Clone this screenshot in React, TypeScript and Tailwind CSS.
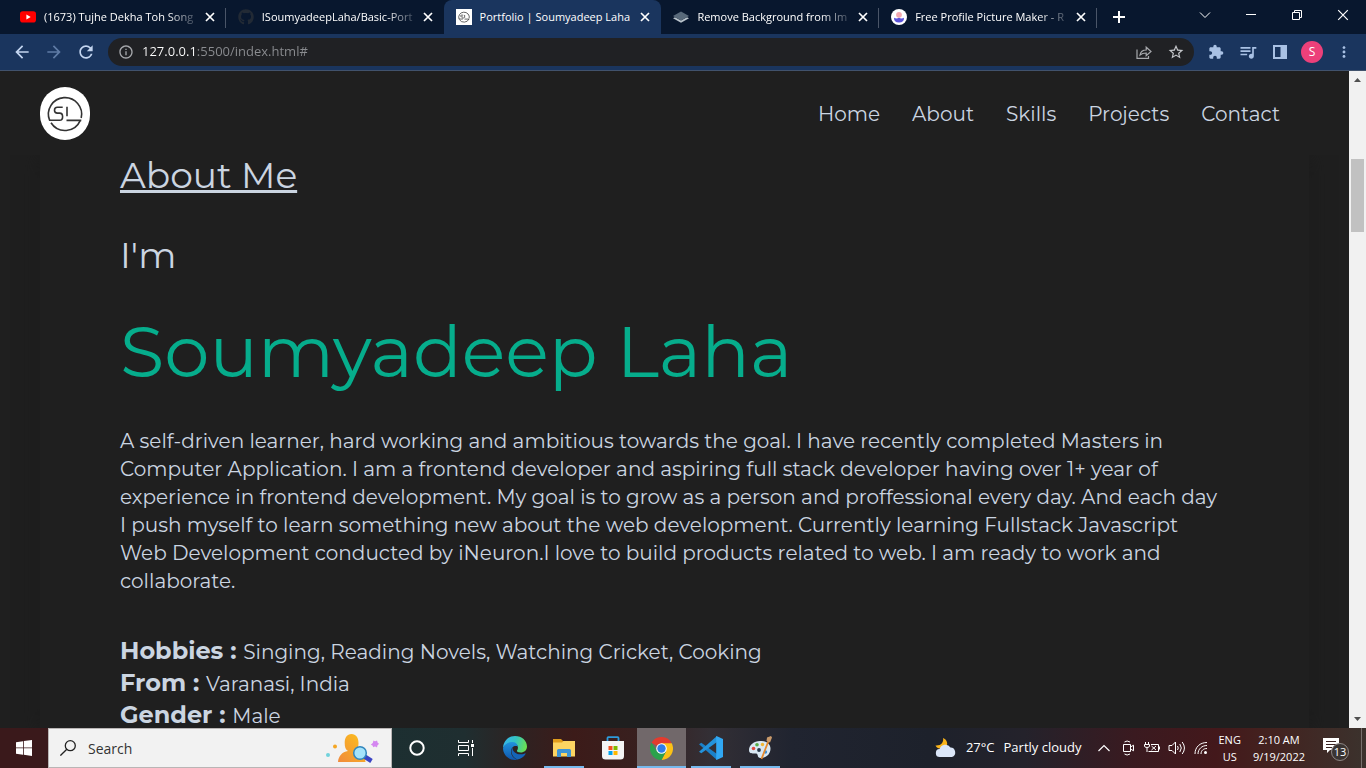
import React from "react";
import type { ReactNode } from "react";
import {
  MdArrowBack,
  MdArrowForward,
  MdRefresh,
  MdInfoOutline,
  MdStarBorder,
  MdExtension,
  MdQueueMusic,
  MdMoreVert,
} from "react-icons/md";
import { FaGithub } from "react-icons/fa";

function Monogram({ className, thin = 2 }: { className: string; thin?: number }) {
  return (
    <svg viewBox="0 0 50 53" preserveAspectRatio="none" className={className} fill="none" stroke="#333" strokeWidth={thin} aria-hidden="true">
      <path d="M9.600 33.300A16.600 16.600 0 1 1 41.200 31" />
      <path d="M11 35.800A16.600 16.600 0 0 0 40.300 33.400" />
      <path d="M22.700 20.300h-5.300q-2.900 0-2.900 2.900t2.900 2.900h2.300q2.900 0 2.900 3.600t-2.900 3.600H9" />
      <path d="M27 19.700v9.600M26.500 33.400h14.800" />
    </svg>
  );
}

function YouTubeIcon() {
  return (
    <svg viewBox="0 0 16 16" className="size-4" aria-hidden="true">
      <rect x="0" y="2.2" width="16" height="11.4" rx="2.8" fill="#f00" />
      <path d="M6.400 5.400v5l4.300-2.500z" fill="#fff" />
    </svg>
  );
}

function LayersIcon() {
  return (
    <svg viewBox="0 0 16 16" className="size-4" aria-hidden="true">
      <path d="M0 9.300l8 4.500 8-4.500-2-1-6 3.300-6-3.300z" fill="#b9c3cb" />
      <path d="M0 7l8-4.400L16 7l-8 4.500z" fill="#58697a" />
    </svg>
  );
}

function AvatarIcon() {
  return (
    <svg viewBox="0 0 16 16" className="size-4" aria-hidden="true">
      <circle cx="8" cy="8" r="8" fill="#fff" />
      <circle cx="8" cy="5.8" r="2.9" fill="#f3a9b0" />
      <path d="M3 8.800q2.500 1.400 5 0 2.500 1.400 5 0 .2 4.700-5 4.700T3 8.800z" fill="#5a52d9" />
    </svg>
  );
}

type Tab = { title: string; icon: ReactNode; active?: boolean; divider?: boolean };

const tabs: Tab[] = [
  { title: "(1673) Tujhe Dekha Toh Song", icon: <YouTubeIcon />, divider: true },
  { title: "ISoumyadeepLaha/Basic-Port", icon: <FaGithub className="size-4 text-[#222a35]" /> },
  {
    title: "Portfolio | Soumyadeep Laha",
    icon: (
      <span className="flex size-4 bg-white">
        <Monogram className="size-4" thin={2.4} />
      </span>
    ),
    active: true,
  },
  { title: "Remove Background from Im", icon: <LayersIcon />, divider: true },
  { title: "Free Profile Picture Maker - R", icon: <AvatarIcon />, divider: true },
];

function CrossIcon({ className }: { className: string }) {
  return (
    <svg viewBox="0 0 10 10" className={className} stroke="currentColor" fill="none" aria-hidden="true">
      <path d="M1 1l8 8M9 1l-8 8" />
    </svg>
  );
}

function TabStrip() {
  return (
    <div className="flex h-[34px] shrink-0 items-stretch bg-[#08172e] text-white">
      <div role="tablist" className="ml-2 grid max-w-[1089px] flex-1 grid-cols-5">
        {tabs.map((t) => (
          <div
            key={t.title}
            className={
              t.active
                ? "flex min-w-0 items-center rounded-t-lg bg-[#1a355e] pr-2 pl-3"
                : "relative flex min-w-0 items-center pr-2 pl-3"
            }
          >
            <button role="tab" aria-selected={!!t.active} className="flex min-w-0 flex-1 items-center gap-2 text-left">
              <span className="shrink-0">{t.icon}</span>
              <span
                className={
                  t.active
                    ? "flex-1 overflow-hidden text-[11px] whitespace-nowrap"
                    : "flex-1 overflow-hidden text-[11px] whitespace-nowrap [mask-image:linear-gradient(to_right,#000_78%,transparent)]"
                }
              >
                {t.title}
              </span>
            </button>
            <button aria-label={"Close " + t.title} className="flex size-4 shrink-0 items-center justify-center">
              <CrossIcon className="size-[10px] [stroke-width:1.7]" />
            </button>
            {t.divider && <span className="absolute top-2 right-0 h-5 w-px bg-[#4a5568]" />}
          </div>
        ))}
      </div>
      <button aria-label="New tab" className="ml-[14px] flex w-4 items-center justify-center">
        <svg viewBox="0 0 12 12" className="size-3" stroke="#fff" strokeWidth="2" aria-hidden="true">
          <path d="M6 0v12M0 6h12" />
        </svg>
      </button>
      <div className="ml-auto flex h-[29px]">
        <button aria-label="Search tabs" className="flex w-[46px] items-center justify-center">
          <svg viewBox="0 0 12 12" className="size-3" stroke="#fff" fill="none" aria-hidden="true">
            <path d="M1 3.500l5 5 5-5" />
          </svg>
        </button>
        <button aria-label="Minimize" className="flex w-[46px] items-center justify-center">
          <svg viewBox="0 0 10 10" className="size-[10px]" stroke="#fff" aria-hidden="true">
            <path d="M0 4.500h10" />
          </svg>
        </button>
        <button aria-label="Restore" className="flex w-[46px] items-center justify-center">
          <svg viewBox="0 0 10 10" className="size-[10px]" stroke="#fff" fill="none" aria-hidden="true">
            <path d="M.5 2.500h7v7h-7zM2.500 2.500v-2h7v7h-2" />
          </svg>
        </button>
        <button aria-label="Close window" className="flex w-[46px] items-center justify-center">
          <CrossIcon className="size-3" />
        </button>
      </div>
    </div>
  );
}

function Toolbar() {
  return (
    <div className="flex h-[37px] shrink-0 items-center border-b border-[#41526c] bg-[#1a355e] text-[#a9c1e4]">
      <div className="flex gap-4 px-[14px]">
        <button aria-label="Back"><MdArrowBack className="size-4 scale-125 text-[#c3d5f0]" /></button>
        <button aria-label="Forward"><MdArrowForward className="size-4 scale-125 text-[#5f7ba5]" /></button>
        <button aria-label="Reload"><MdRefresh className="size-4 scale-125 text-[#c3d5f0]" /></button>
      </div>
      <div className="flex h-7 min-w-0 flex-1 items-center rounded-full bg-[#202124] px-[10px]">
        <MdInfoOutline className="size-4 text-[#a7a9ad]" />
        <input
          type="text"
          aria-label="Address"
          defaultValue="127.0.0.1:5500/index.html#"
          className="ml-2 min-w-0 flex-1 bg-[linear-gradient(90deg,#fff_54px,#8b8d91_54px)] bg-clip-text text-[13px] text-transparent outline-none"
        />
        <button aria-label="Share" className="mr-4">
          <svg viewBox="0 0 16 16" className="size-4" fill="none" stroke="#a7a9ad" strokeWidth="1.2" aria-hidden="true">
            <path d="M1 5.500v8.900h11.500v-2.500M4 11c.6-3.300 2.800-5 6.200-5V3.200l4.800 4.300-4.800 4.200V9c-2.700 0-4.500.5-6.200 2z" />
          </svg>
        </button>
        <button aria-label="Bookmark this page"><MdStarBorder className="size-4 scale-110 text-[#c4c6ca]" /></button>
      </div>
      <div className="flex items-center gap-4 px-[14px]">
        <button aria-label="Extensions"><MdExtension className="size-4" /></button>
        <button aria-label="Media controls"><MdQueueMusic className="size-4 scale-125" /></button>
        <button aria-label="Side panel">
          <svg viewBox="0 0 16 16" className="size-4" aria-hidden="true">
            <path d="M1 1h14v14H1zM3 3v10h5.500V3z" fillRule="evenodd" fill="currentColor" />
          </svg>
        </button>
        <button aria-label="Profile" className="-mx-[3px] flex size-[22px] items-center justify-center rounded-full bg-[#ec407a] text-xs text-white">
          S
        </button>
        <button aria-label="Menu"><MdMoreVert className="size-4 scale-110" /></button>
      </div>
    </div>
  );
}

const links = ["Home", "About", "Skills", "Projects", "Contact"];

const bio =
  "A self-driven learner, hard working and ambitious towards the goal. I have recently completed Masters in Computer Application. I am a frontend developer and aspiring full stack developer having over 1+ year of experience in frontend development. My goal is to grow as a person and proffessional every day. And each day I push myself to learn something new about the web development. Currently learning Fullstack Javascript Web Development conducted by iNeuron.I love to build products related to web. I am ready to work and collaborate.";

const facts = [
  { label: "Hobbies : ", value: "Singing, Reading Novels, Watching Cricket, Cooking" },
  { label: "From : ", value: "Varanasi, India" },
  { label: "Gender : ", value: "Male" },
];

function Portfolio() {
  return (
    <div className="min-w-0 flex-1 overflow-hidden bg-[#1f1f1f] font-[Montserrat,Inter,sans-serif] text-[#cbd5e1]">
      <header className="relative z-10 flex h-[84px] items-center justify-between bg-[#1f1f1f] pr-[69px] pl-10">
        <a href="#" aria-label="Soumyadeep Laha" className="flex h-[53px] w-[50px] rounded-full bg-white">
          <Monogram className="h-[53px] w-[50px]" thin={1.6} />
        </a>
        <nav className="flex gap-8 pt-0.5 text-[20px]">
          {links.map((l) => (
            <a key={l} href="#">{l}</a>
          ))}
        </nav>
      </header>
      <section className="mx-10 flex flex-col gap-10 pr-[88px] pl-20 shadow-[0_0_20px_#1b1b1b]">
        <h2 className="text-[36px] leading-10 underline decoration-[3px] underline-offset-2">About Me</h2>
        <p className="text-[36px] leading-10">I'm</p>
        <h1 className="text-[72px] leading-[72px] text-[#06ad8c]">Soumyadeep Laha</h1>
        <p className="text-[20px] leading-7">{bio}</p>
        <ul className="pt-px text-[20px] leading-8">
          {facts.map((f) => (
            <li key={f.label}>
              <strong className="text-[24px] leading-none font-bold">{f.label}</strong>
              {f.value}
            </li>
          ))}
        </ul>
      </section>
    </div>
  );
}

function PageScrollbar() {
  return (
    <div aria-hidden="true" className="flex w-[17px] shrink-0 flex-col items-center bg-[#f1f1f1]">
      <svg viewBox="0 0 17 17" className="size-[17px]" fill="#505050"><path d="M5 11h7L8.500 7z" /></svg>
      <div className="flex w-full flex-1 flex-col items-center">
        <div className="h-[11.4%]" />
        <div className="h-[11.7%] w-[13px] bg-[#c1c1c1]" />
      </div>
      <svg viewBox="0 0 17 17" className="size-[17px]" fill="#505050"><path d="M5 6h7l-3.500 4z" /></svg>
    </div>
  );
}

function SearchArt() {
  return (
    <svg viewBox="0 0 56 32" className="h-8 w-14" aria-hidden="true">
      <defs>
        <linearGradient id="person" x1="0" y1="1" x2="1" y2="0">
          <stop offset="0" stopColor="#f08a3c" />
          <stop offset="1" stopColor="#fcc21b" />
        </linearGradient>
      </defs>
      <path d="M13 30c.5-6 4-10 10-11-2.500-1.500-3.300-4-3.300-8 0-5.500 2.300-9 6.800-9s7 3.500 7 9c0 4-.8 6.500-3.300 8 6 1 9.800 5 10.300 11z" fill="url(#person)" />
      <path d="M39.500 24.500l7 4.500" stroke="#3b44c4" strokeWidth="4.500" />
      <circle cx="35" cy="21" r="6.300" fill="#a5e3fa" stroke="#3186bd" strokeWidth="1.500" />
      <circle cx="10" cy="14.500" r="2" fill="#f5a623" />
      <circle cx="3" cy="23" r="2" fill="#71d2dc" />
      <path d="M48.500 8.500q1.500 1.500 3.500 0 .2 2.400 2.200 3.300-2.300 1-2.200 3.700-2-1.700-3.700-.2-.3-2.300-2.500-2.600 2.500-1.200 2.700-4.200z" fill="#d486f0" />
    </svg>
  );
}

function EdgeIcon() {
  return (
    <svg viewBox="0 0 24 24" className="size-6" aria-hidden="true">
      <defs>
        <linearGradient id="edgeTop" x1="0" y1="0.300" x2="1" y2="0.500">
          <stop offset="0" stopColor="#36b5ee" />
          <stop offset="0.500" stopColor="#34c3c0" />
          <stop offset="1" stopColor="#6be050" />
        </linearGradient>
        <linearGradient id="edgeSide" x1="0" y1="0" x2="0" y2="1">
          <stop offset="0" stopColor="#2193dd" />
          <stop offset="1" stopColor="#0f56ad" />
        </linearGradient>
      </defs>
      <path d="M0 12C.5 5 5.500 0 12 0c7 0 12 4.800 12 10.500 0 3.700-2.800 6-6.300 6-3 0-4-1-3.700-2 2-2.300 1-7.500-4.500-7.500C5 7 1.500 9 0 12z" fill="url(#edgeTop)" />
      <path d="M0 12c1.500-3.800 5-6 9-6 3.500 0 5.500 2 5.800 4.500-3-1.500-6.800.5-6.800 5 0 4.200 3 7.500 7 8-1 .3-2 .5-3 .5-6.600 0-12-5.400-12-12z" fill="url(#edgeSide)" />
      <path d="M9.500 11.500C7 15 9 21.500 14.500 23.500c3.500-.7 6.500-2.800 8-5.500.3-.7-.2-.9-.7-.6-5.300 2.400-12.300.1-12.300-5.900z" fill="#1464b8" />
    </svg>
  );
}

function FolderIcon() {
  return (
    <svg viewBox="0 0 22 20" className="h-5 w-[22px]" aria-hidden="true">
      <path d="M0 1h8l2 2h11.500v4H0z" fill="#e09c1c" />
      <path d="M0 4.500h9l1.500-1.500H22v15.500H0z" fill="#fcd462" />
      <path d="M4 19v-6.500q0-1.500 1.500-1.500h11q1.500 0 1.500 1.500V19h-4v-4H8v4z" fill="#3d94d6" />
    </svg>
  );
}

function StoreIcon() {
  return (
    <svg viewBox="0 0 24 24" className="size-6" aria-hidden="true">
      <path d="M6.500 6V2q0-.8.8-.8h9.400q.8 0 .8.800v4" fill="none" stroke="#2d9bdb" strokeWidth="1.800" />
      <path d="M1 5h22v15q0 3.500-3.500 3.500h-15Q1 23.500 1 20z" fill="#f4f4f4" />
      <path d="M7.500 10h4v4h-4z" fill="#f25022" />
      <path d="M12.500 10h4v4h-4z" fill="#7fba00" />
      <path d="M7.500 15h4v4h-4z" fill="#00a4ef" />
      <path d="M12.500 15h4v4h-4z" fill="#ffb900" />
    </svg>
  );
}

function ChromeIcon() {
  return (
    <svg viewBox="0 0 24 24" className="size-[23px]" aria-hidden="true">
      <path d="M12 12L1.600 6A12 12 0 0 1 22.400 6z" fill="#e33b2e" />
      <path d="M12 6.500h10.700A12 12 0 0 1 12 24l4.800-9.200z" fill="#fbc116" />
      <path d="M1.600 6A12 12 0 0 0 12 24l4.800-9.200H7.200z" fill="#2ba24c" />
      <circle cx="12" cy="12" r="5.500" fill="#fff" />
      <circle cx="12" cy="12" r="4.400" fill="#2f7de9" />
    </svg>
  );
}

function CodeIcon() {
  return (
    <svg viewBox="0 0 24 24" className="size-6" aria-hidden="true">
      <path d="M0 8.300l2.300-1.600L18 18v6L0 8.300z" fill="#1b81c9" />
      <path d="M0 15.700l2.300 1.600L18 6V0L0 15.700z" fill="#2393dc" />
      <path d="M17.500 0L24 3v18l-6.500 3q-.3-.3-.3-1V1q0-.7.3-1z" fill="#31a8f3" />
    </svg>
  );
}

function PaintIcon() {
  return (
    <svg viewBox="0 0 24 24" className="size-6" aria-hidden="true">
      <path d="M1 14C1 9 6 5 12 5c6.500 0 10.500 3 10.500 7.500 0 5-3.500 9.500-10 9.500-4 0-1.500-4-4.500-4.500-2.500-.4-7 1-7-3.500z" fill="#d9e8f3" />
      <circle cx="5.500" cy="12.500" r="1.800" fill="#e0483e" />
      <circle cx="9" cy="8.700" r="1.800" fill="#59ad47" />
      <circle cx="14.500" cy="8.500" r="1.700" fill="#f2b632" />
      <circle cx="11" cy="14" r="1.900" fill="#27384a" />
      <circle cx="17.500" cy="16" r="1.700" fill="#3f8fd2" />
      <path d="M20.500 5L13.500 23" stroke="#e58a2e" strokeWidth="1.800" />
      <path d="M18.500 5l.5-3.500L23 0l1 1.500-2 5z" fill="#c99a6b" />
    </svg>
  );
}

function TaskViewIcon() {
  return (
    <svg viewBox="0 0 16 16" className="size-4" fill="none" stroke="#fff" aria-hidden="true">
      <path d="M.5 0v2.500h10V0M.5 16v-2.500h10V16M.5 5.500h10v5H.5zM14.500 0v3M14.500 8v8" />
      <path d="M13 4h3v3h-3z" fill="#fff" stroke="none" />
    </svg>
  );
}

type PinnedApp = { name: string; icon: ReactNode; state: string };

const running = "flex w-[49px] items-center justify-center bg-[linear-gradient(#76b9ed,#76b9ed)] bg-[length:40px_2px] bg-bottom bg-no-repeat";
const focused = "flex w-[49px] items-center justify-center bg-[#71686a] bg-[linear-gradient(#76b9ed,#76b9ed)] bg-[length:100%_2px] bg-bottom bg-no-repeat";
const idle = "flex w-[49px] items-center justify-center";

const apps: PinnedApp[] = [
  {
    name: "Cortana",
    icon: (
      <svg viewBox="0 0 16 16" className="size-4" aria-hidden="true">
        <circle cx="8" cy="8" r="6.7" fill="none" stroke="#fff" strokeWidth="2" />
      </svg>
    ),
    state: idle,
  },
  { name: "Task View", icon: <TaskViewIcon />, state: idle },
  { name: "Microsoft Edge", icon: <EdgeIcon />, state: idle },
  { name: "File Explorer", icon: <FolderIcon />, state: running },
  { name: "Microsoft Store", icon: <StoreIcon />, state: idle },
  { name: "Google Chrome", icon: <ChromeIcon />, state: focused },
  { name: "Visual Studio Code", icon: <CodeIcon />, state: running },
  { name: "Paint", icon: <PaintIcon />, state: running },
];

function Tray() {
  return (
    <div className="ml-auto flex items-center text-white">
      <button className="flex items-center gap-[9px] text-[13px] whitespace-nowrap">
        <svg viewBox="0 0 22 22" className="size-[22px]" aria-hidden="true">
          <path d="M8 1c1 4-2 8-7.500 7.500C2 12 8 13 11 10c2.500-3 1-7.500-3-9z" fill="#fbb41a" />
          <path d="M5 20a4 4 0 0 1-.3-8A6 6 0 0 1 15.500 10.500 4.900 4.900 0 0 1 17 20z" fill="#dbe6f8" />
        </svg>
        <span>27°C</span>
        <span>Partly cloudy</span>
      </button>
      <button aria-label="Show hidden icons" className="ml-[17px]">
        <svg viewBox="0 0 12 12" className="size-3" fill="none" stroke="#fff" strokeWidth="1.2" aria-hidden="true"><path d="M.5 9L6 3.500 11.500 9" /></svg>
      </button>
      <button aria-label="Meet Now" className="ml-3">
        <svg viewBox="0 0 14 16" className="h-4 w-[14px]" fill="none" stroke="#fff" aria-hidden="true">
          <path d="M1.500 4.500h7v7h-7zM8.500 7l3-1.800v5.600l-3-1.800M2.500 2Q5 0 8 2M2.500 14q2.500 2 5.500 0" />
        </svg>
      </button>
      <button aria-label="Battery" className="ml-2">
        <svg viewBox="0 0 16 16" className="size-4" fill="none" stroke="#fff" aria-hidden="true">
          <path d="M1.500 2v2.500M4.500 2v2.500M.5 4.500h5v1.500q0 1.500-2.500 1.500T.5 6zM3 7.500V12M7 4.500h7.500v7H4.500M15.500 6.500v3" />
          <path d="M7.500 6l4.500 4M12 6l-4.500 4" />
        </svg>
      </button>
      <button aria-label="Volume" className="ml-2">
        <svg viewBox="0 0 18 16" className="h-4 w-[18px]" fill="none" stroke="#fff" aria-hidden="true">
          <path d="M1 5.500h3l3.500-3.500v12L4 10.500H1zM9.500 6q1.500 2 0 4M11.800 4q3 4 0 8M14.200 2q4.500 6 0 12" />
        </svg>
      </button>
      <button aria-label="Network" className="ml-2">
        <svg viewBox="0 0 14 14" className="size-[14px]" fill="none" stroke="#fff" aria-hidden="true">
          <path d="M1 13C1 6 6 1.500 13 1.500M4 13c0-5 4-8.500 9-8.500M7 13c0-3.500 2.500-5.500 6-5.500" />
          <circle cx="11.5" cy="11.5" r="1.5" fill="#fff" stroke="none" />
        </svg>
      </button>
      <button className="ml-[10px] text-center text-[11px] leading-[17px]">
        <span className="block">ENG</span>
        <span className="block">US</span>
      </button>
      <button className="ml-3 text-center text-[11px] leading-[17px]">
        <span className="block">2:10 AM</span>
        <span className="block">9/19/2022</span>
      </button>
      <button aria-label="Notifications" className="relative mr-3 ml-[18px] size-[26px]">
        <svg viewBox="0 0 26 26" className="size-[26px]" aria-hidden="true">
          <path d="M0 3h16v12H7l-3 3v-3H0z" fill="#fff" />
          <path d="M3 6.500h10M3 9.500h10M3 12.500h6" stroke="#3a2422" />
        </svg>
        <span className="absolute right-0 bottom-0 flex size-[18px] items-center justify-center rounded-full border border-[#8d8785] bg-[#3a3432] text-[11px]">
          13
        </span>
      </button>
      <span className="h-10 w-px bg-[#77706d]" />
      <span className="w-1" />
    </div>
  );
}

function Taskbar() {
  return (
    <footer className="flex h-10 shrink-0 bg-[linear-gradient(90deg,#3a191b_0%,#3a191b_4%,#1c2f31_28%,#1f2e30_34%,#2e2222_38%,#3c1b19_42%,#38201f_47%,#332f35_52%,#202430_58%,#1d212b_68%,#24222b_75%,#3a1a20_83%,#43181b_89%,#43221f_93%,#3b322d_100%)]">
      <button aria-label="Start" className="flex w-12 items-center justify-center">
        <svg viewBox="0 0 16 16" className="size-4" fill="#fff" aria-hidden="true">
          <path d="M0 2.200L7 1.200v6.300H0zM7.800 1.100L16 0v7.500H7.800zM0 8.300h7v6.400l-7-1zM7.800 8.300H16V16l-8.200-1.200z" />
        </svg>
      </button>
      <label className="flex w-[344px] items-center border border-[#b9b5b5] bg-[#f2f2f2] pr-[10px] pl-[11px]">
        <svg viewBox="0 0 16 16" className="size-4 shrink-0" fill="none" stroke="#222" strokeWidth="1.3" aria-hidden="true">
          <circle cx="10.3" cy="5.7" r="5" />
          <path d="M6.800 9.200L.4 15.600" />
        </svg>
        <input type="text" aria-label="Search" placeholder="Search" className="ml-3 min-w-0 flex-1 bg-transparent text-[14px] outline-none placeholder:text-[#333]" />
        <SearchArt />
      </label>
      <nav aria-label="Pinned apps" className="flex">
        {apps.map((a) => (
          <button key={a.name} aria-label={a.name} className={a.state}>{a.icon}</button>
        ))}
      </nav>
      <Tray />
    </footer>
  );
}

export default function App() {
  return (
    <div className="flex h-screen flex-col overflow-hidden font-['Segoe_UI','Open_Sans',sans-serif]">
      <TabStrip />
      <Toolbar />
      <main className="flex min-h-0 flex-1">
        <Portfolio />
        <PageScrollbar />
      </main>
      <Taskbar />
    </div>
  );
}
